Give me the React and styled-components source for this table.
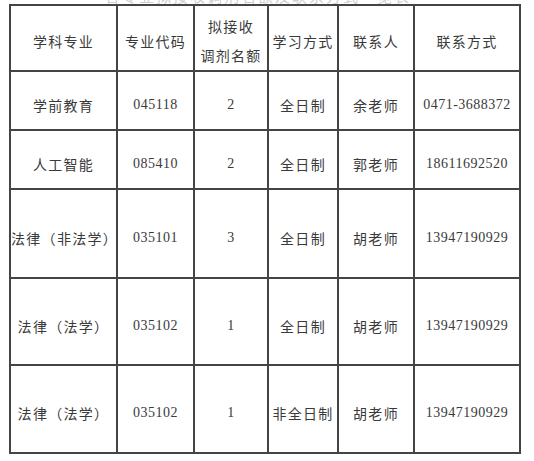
import React from 'react'
import styled, { createGlobalStyle } from 'styled-components'

const GlobalStyle = createGlobalStyle`
  html, body {
    margin: 0;
    padding: 0;
    background: #ffffff;
  }
`

const rows = [
  { name: "学前教育", code: "045118", quota: "2", mode: "全日制", person: "余老师", phone: "0471-3688372", h: 59 },
  { name: "人工智能", code: "085410", quota: "2", mode: "全日制", person: "郭老师", phone: "18611692520", h: 59 },
  { name: "法律（非法学）", code: "035101", quota: "3", mode: "全日制", person: "胡老师", phone: "13947190929", h: 89 },
  { name: "法律（法学）", code: "035102", quota: "1", mode: "全日制", person: "胡老师", phone: "13947190929", h: 87 },
  { name: "法律（法学）", code: "035102", quota: "1", mode: "非全日制", person: "胡老师", phone: "13947190929", h: 88 },
]

const colWidths = [107, 77, 74, 70, 76, 106]

const Page = styled.div`
  padding-left: 9px;
  width: 510px;
`

const Title = styled.div`
  height: 4px;
  overflow: hidden;
  padding-left: 96px;
  font-family: "Noto Sans CJK SC", sans-serif;
  font-size: 15px;
  line-height: 15px;
  letter-spacing: 2px;
  color: #cfcfcf;
  white-space: nowrap;
`

const TitleText = styled.span`
  display: block;
  margin-top: -12px;
`

const Table = styled.table`
  border-collapse: collapse;
  table-layout: fixed;
  width: 510px;
  border: 2px solid #444;
`

const HeadRow = styled.tr`
  height: 62px;
`

const Row = styled.tr`
  height: ${p => p.$h}px;
`

const Cell = styled.td`
  border: 2px solid #444;
  padding: 8px 0 0 0;
  text-align: center;
  vertical-align: middle;
  color: #3a3a3a;
  white-space: nowrap;
  font-family: ${p => p.$num ? '"Liberation Serif", serif' : '"Noto Sans CJK SC", sans-serif'};
  font-size: 14px;
  letter-spacing: ${p => p.$num ? '0.5px' : '1.3px'};
  line-height: ${p => p.$lh || 20}px;
`

const HeadCell = styled(Cell).attrs({ as: 'th' })`
  font-weight: 400;
  padding-top: 6px;
`

export default function App() {
  return (
    <Page>
      <GlobalStyle />
      <Title><TitleText>各专业拟接收调剂名额及联系方式一览表</TitleText></Title>
      <Table>
        <colgroup>
          {colWidths.map((w, i) => <col key={i} style={{ width: w }} />)}
        </colgroup>
        <thead>
          <HeadRow>
            <HeadCell>学科专业</HeadCell>
            <HeadCell>专业代码</HeadCell>
            <HeadCell $lh={29}>拟接收<br />调剂名额</HeadCell>
            <HeadCell>学习方式</HeadCell>
            <HeadCell>联系人</HeadCell>
            <HeadCell>联系方式</HeadCell>
          </HeadRow>
        </thead>
        <tbody>
          {rows.map((r, i) => (
            <Row key={i} $h={r.h}>
              <Cell>{r.name}</Cell>
              <Cell $num>{r.code}</Cell>
              <Cell $num>{r.quota}</Cell>
              <Cell>{r.mode}</Cell>
              <Cell>{r.person}</Cell>
              <Cell $num>{r.phone}</Cell>
            </Row>
          ))}
        </tbody>
      </Table>
    </Page>
  )
}
